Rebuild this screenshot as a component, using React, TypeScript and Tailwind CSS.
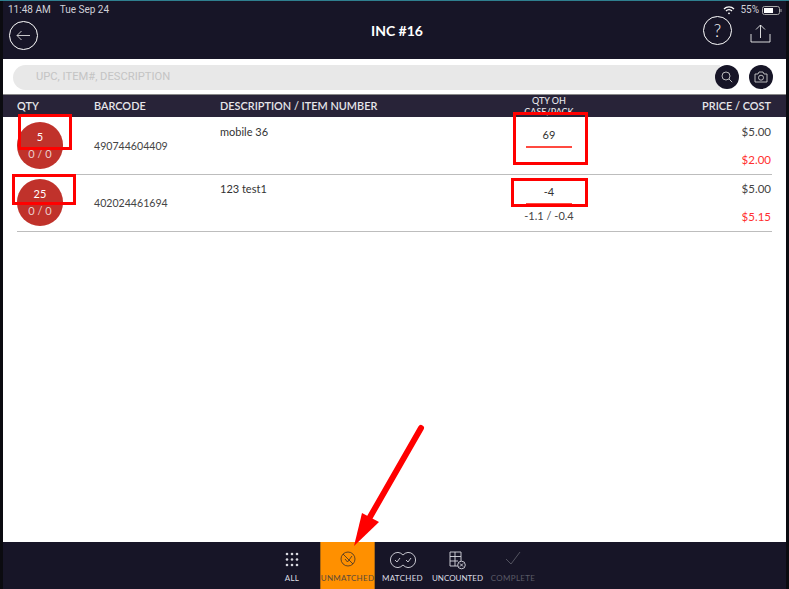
import React from "react";

const font = { fontFamily: "Lato, sans-serif" };

function Row({ qty, bar, desc, oh, sub, cost }: { qty: string; bar: string; desc: string; oh: string; sub?: string; cost: string }) {
  return (
    <div className="mx-[14px] h-[57px] border-b border-[#bdbdbd] flex relative">
      <div className="w-[77px] shrink-0 pt-[4px]">
        <div className="w-[46px] h-[47px] rounded-full bg-[#c0322b] text-white text-[11px] flex flex-col items-center justify-center leading-[17px] pb-[2px]">
          <span>{qty}</span>
          <span className="text-[#ecd0ce]">0 / 0</span>
        </div>
      </div>
      <div className="w-[126px] shrink-0 pt-[20px] text-[10.6px] leading-[16px] text-[#444]">{bar}</div>
      <div className="w-[299px] shrink-0 pt-[6px] text-[11px] leading-[16px] text-[#333]">{desc}</div>
      <div className="w-[60px] flex flex-col items-center shrink-0 pt-[9px]">
        <div className="w-[46px] text-center text-[11px] leading-[16px] text-[#333] border-b-2 border-[#ff4a40] pb-[3px]">{oh}</div>
        {sub && <div className="text-[11px] leading-[14px] mt-[4px] text-[#444] whitespace-nowrap">{sub}</div>}
      </div>
      <div className="absolute right-[1px] top-[6px] text-right text-[11.5px] text-[#444] leading-[16px]">
        <div>$5.00</div>
        <div className="mt-[12px] text-[#ff3030]">{cost}</div>
      </div>
    </div>
  );
}

export default function App() {
  return (
    <div style={font} className="w-[789px] h-[589px] bg-[#0b0b10] relative overflow-hidden px-[3px] border-t border-[#2f7f8f]">
      <div className="h-full bg-white flex flex-col">
        <div className="h-[58px] bg-[#171527] shrink-0 relative text-white">
          <div className="absolute left-[5px] top-[3px] flex gap-[9px] text-[10px] leading-[12px] text-[#d0d0d8] whitespace-pre" style={{ fontFamily: "Roboto, sans-serif" }}>
            <span>11:48 AM</span>
            <span>Tue Sep 24</span>
          </div>
          <div className="absolute right-[4px] top-[3px] flex items-center gap-[3px] text-[10px] leading-[12px] text-[#d0d0d8]" style={{ fontFamily: "Roboto, sans-serif" }}>
            <svg className="mr-[2px]" width="12" height="9" viewBox="0 0 12 9" fill="none" stroke="#fff" strokeWidth="1.3"><path d="M1 3a7 7 0 0 1 10 0M3 5a4 4 0 0 1 6 0" /><circle cx="6" cy="7.3" r="0.9" fill="#fff" stroke="none" /></svg>
            <span>55%</span>
            <svg width="20" height="9" viewBox="0 0 20 9" fill="none"><rect x="0.5" y="0.5" width="17" height="8" rx="2" stroke="#aaa" /><rect x="2" y="2" width="9" height="5" fill="#fff" /><rect x="18.5" y="3" width="1" height="3" fill="#aaa" /></svg>
          </div>
          <div className="absolute left-[6px] top-[20px] w-[29px] h-[29px] rounded-full border border-white flex items-center justify-center">
            <svg width="15" height="11" viewBox="0 0 15 11" fill="none" stroke="#ddd" strokeWidth="0.9"><path d="M14 5.5H1M5.5 1 1 5.5 5.5 10" /></svg>
          </div>
          <div className="absolute left-[5px] right-0 top-[21px] text-center text-[14px] font-bold leading-[17px]">INC #16</div>
          <div className="absolute right-[54px] top-[15px] w-[29px] h-[29px] rounded-full border border-white flex items-center justify-center text-[17px] font-light">?</div>
          <div className="absolute right-[15px] top-[23px]">
            <svg width="21" height="19" viewBox="0 0 21 19" fill="none" stroke="#eee" strokeWidth="0.9"><path d="M10.5 14V1M6 5.5 10.5 1 15 5.5M1 10v8h19v-8" /></svg>
          </div>
        </div>
        <div className="h-[35px] shrink-0 flex items-center pl-[10px] pr-[13px] pt-[1px]">
          <div className="flex-1 h-[25px] rounded-l-full bg-[#e8e8e8] flex items-center pl-[23px] text-[11.2px] text-[#c4c4c4]" style={{ fontFamily: "Roboto, sans-serif" }}>UPC, ITEM#, DESCRIPTION</div>
          <div className="flex items-center gap-[10px] -ml-[5px]">
            <div className="w-[24px] h-[24px] rounded-full bg-[#171527] flex items-center justify-center">
              <svg width="12" height="12" viewBox="0 0 12 12" fill="none" stroke="#ccc" strokeWidth="0.9"><circle cx="5" cy="5" r="4" /><path d="m8 8 3.2 3.2" /></svg>
            </div>
            <div className="w-[24px] h-[24px] rounded-full bg-[#171527] flex items-center justify-center">
              <svg width="14" height="12" viewBox="0 0 14 12" fill="none" stroke="#ccc" strokeWidth="0.9"><path d="M1 3h3l1-2h4l1 2h3v8H1z" /><circle cx="7" cy="6.7" r="2.5" /></svg>
            </div>
          </div>
        </div>
        <div className="h-[23px] shrink-0 bg-[#282338] border-t border-[#888] flex items-center text-[#e6e6ea] text-[10.9px] font-semibold relative pl-[14px]">
          <span className="w-[77px]">QTY</span>
          <span className="w-[126px]">BARCODE</span>
          <span>DESCRIPTION / ITEM NUMBER</span>
          <div className="absolute left-[499px] w-[94px] top-[0px] h-[22px] overflow-hidden text-center text-[9px] leading-[11px] font-medium">
            <div>QTY OH</div>
            <div>CASE/PACK</div>
          </div>
          <span className="absolute right-[15px]">PRICE / COST</span>
        </div>
        <div className="pt-[1px] shrink-0">
          <Row qty="5" bar="490744604409" desc="mobile 36" oh="69" cost="$2.00" />
          <Row qty="25" bar="402024461694" desc="123 test1" oh="-4" sub="-1.1 / -0.4" cost="$5.15" />
        </div>
        <div className="flex-1" />
        <div className="h-[47px] shrink-0 bg-[#171527] flex pl-[261px] text-[8px] tracking-[0.3px] text-[#dcdce4]">
          <div className="w-[56px] flex flex-col items-center pt-[10px]">
            <svg width="14" height="15" viewBox="0 0 14 15" fill="#d8d8e0"><circle cx="2" cy="2" r="1.3"/><circle cx="7" cy="2" r="1.3"/><circle cx="12" cy="2" r="1.3"/><circle cx="2" cy="7.5" r="1.3"/><circle cx="7" cy="7.5" r="1.3"/><circle cx="12" cy="7.5" r="1.3"/><circle cx="2" cy="13" r="1.3"/><circle cx="7" cy="13" r="1.3"/><circle cx="12" cy="13" r="1.3"/></svg>
            <span className="mt-[5px]">ALL</span>
          </div>
          <div className="w-[55px] bg-[#ff9000] border-x border-[#b06a10] flex flex-col items-center pt-[9px] text-[#5a4a3a]">
            <svg width="16" height="16" viewBox="0 0 16 16" fill="none" stroke="#3a2f2a" strokeWidth="0.8"><circle cx="8" cy="8" r="7" /><path d="M3 3l10 10M5 8l2.5 3L12 5" /></svg>
            <span className="mt-[5px] whitespace-nowrap">UNMATCHED</span>
          </div>
          <div className="w-[55px] flex flex-col items-center pt-[9px]">
            <svg width="26" height="18" viewBox="0 0 26 18" fill="none" stroke="#d8d8e0" strokeWidth="0.9"><path d="M13 4a8 8 0 0 1 5-2.6 7.6 7.6 0 0 1 0 15.200A8 8 0 0 1 13 14a8 8 0 0 1-5 2.600A7.600 7.600 0 0 1 8 1.400 8 8 0 0 1 13 4z" /><path d="m5 9 2 2 3-4M16 9l2 2 3-4" /></svg>
            <span className="mt-[3px]">MATCHED</span>
          </div>
          <div className="w-[55px] flex flex-col items-center pt-[9px]">
            <svg width="17" height="19" viewBox="0 0 17 19" fill="none" stroke="#d8d8e0" strokeWidth="0.9"><path d="M9 15H1V1h11v9M1 5.500h11M1 10h8M6 1v14" /><circle cx="12.500" cy="14" r="3.800" fill="#171527" /><path d="m11 12.500 3 3m0-3-3 3" /></svg>
            <span className="mt-[2px] tracking-normal">UNCOUNTED</span>
          </div>
          <div className="w-[56px] flex flex-col items-center pt-[9px] text-[#5a5a66]">
            <svg width="16" height="14" viewBox="0 0 16 14" fill="none" stroke="#5a5a66" strokeWidth="0.9"><path d="m1 8 5 5L15 1" /></svg>
            <span className="mt-[7px]">COMPLETE</span>
          </div>
        </div>
      </div>
      <div className="absolute left-[18px] top-[113px] w-[54px] h-[36px] border-[3px] border-[#f00]" />
      <div className="absolute left-[12px] top-[173px] w-[64px] h-[31px] border-[3px] border-[#f00]" />
      <div className="absolute left-[513px] top-[111px] w-[75px] h-[53px] border-[3px] border-[#f00]" />
      <div className="absolute left-[511px] top-[177px] w-[77px] h-[29px] border-[3px] border-[#f00]" />
      <svg className="absolute left-[345px] top-[419px]" width="85" height="130" viewBox="0 0 85 130" fill="none">
        <path d="M76 8 25 97" stroke="#f00" strokeWidth="6" strokeLinecap="round" />
        <path d="M9 126 17 93 34 102z" fill="#f00" />
      </svg>
    </div>
  );
}
